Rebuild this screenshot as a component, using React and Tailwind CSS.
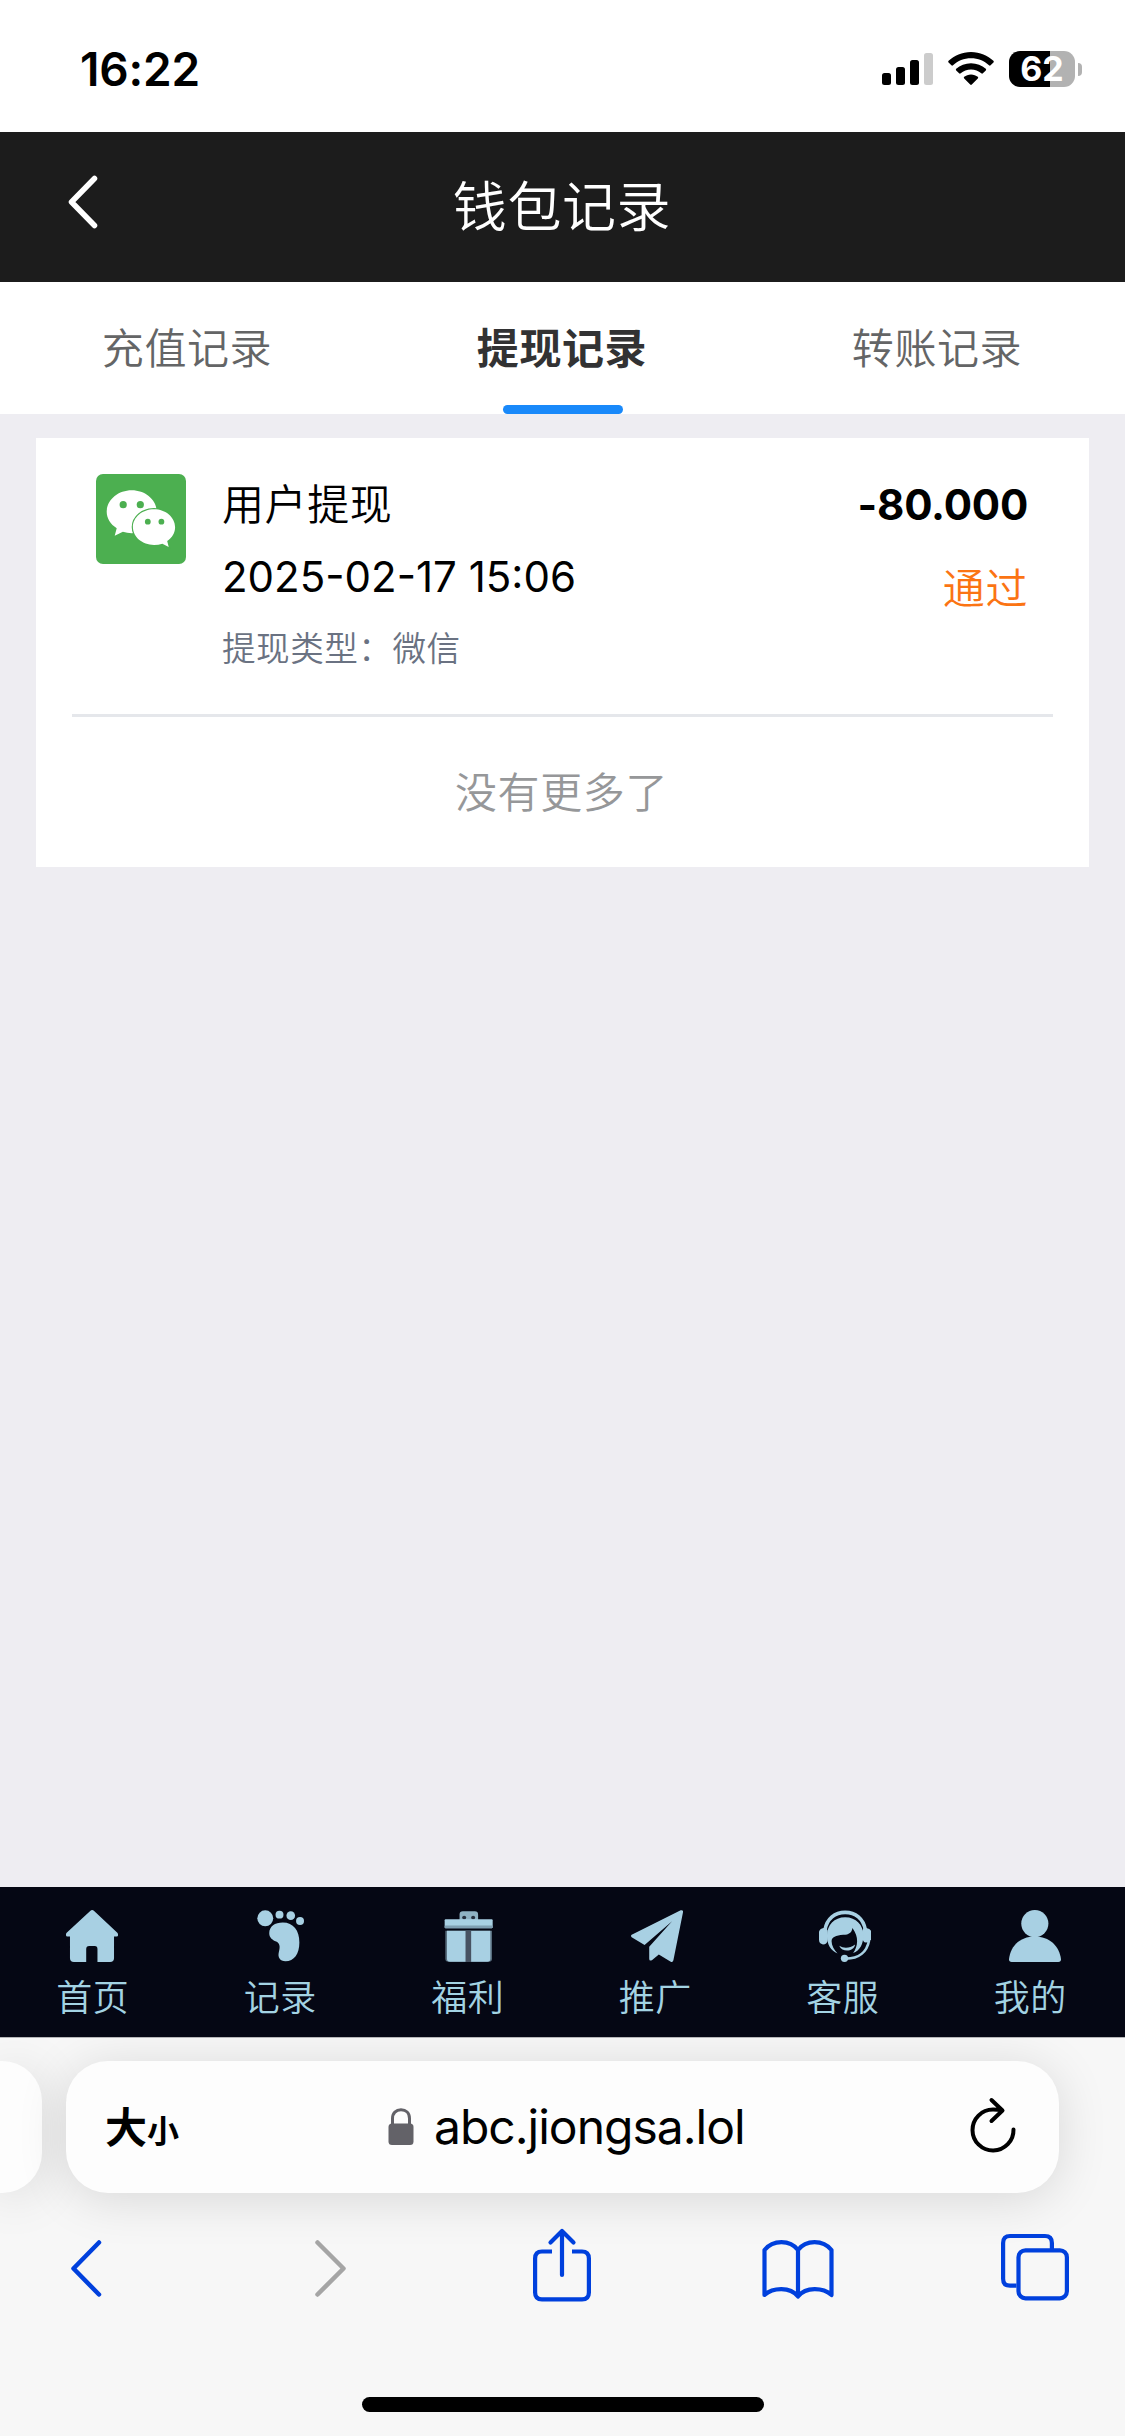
import React, { useState } from 'react';

// ==========================================================
// DATOS
// ==========================================================
const TABS = ['充值记录', '提现记录', '转账记录'];

const RECORDS = [
  { id: 1, title: '用户提现', time: '2025-02-17 15:06', type: '微信', amount: '-80.000', status: '通过' },
];

// ==========================================================
// ICONOS
// ==========================================================
const WechatIcon = () => (
  <svg viewBox="0 0 90 90" className="w-[90px] h-[90px] shrink-0">
    <rect width="90" height="90" rx="7" fill="#4caf50" />
    <path d="M35.7 16.3C49.5 16.3 60.8 26 60.8 37.8S49.5 59.2 35.7 59.2c-3 0-6-.5-8.8-1.4L18.700 61.700l2-7.500C14.500 50.300 10.700 44.500 10.700 37.800 10.700 26 22 16.300 35.700 16.300Z" fill="#fff" />
    <path d="M58 35.200c11.700 0 21.100 8 21.100 18 0 5.500-3 10.500-7.900 13.700l1.500 6.100-6.300-3.200c-2.600.8-5.400 1.200-8.400 1.200-11.700 0-21.100-8-21.100-17.900s9.400-17.900 21.100-17.900Z" fill="#fff" stroke="#4caf50" strokeWidth="2.4" paintOrder="stroke" />
    <g fill="#4caf50">
      <circle cx="27.2" cy="30.7" r="3.6" />
      <circle cx="44.3" cy="30.7" r="3.6" />
      <circle cx="51.8" cy="47.7" r="2.9" />
      <circle cx="65.4" cy="47.7" r="2.9" />
    </g>
  </svg>
);

const NavSvg = ({ children }) => (
  <svg viewBox="0 0 157 157" className="w-[52px] h-[52px]" fill="#a8d0e3">
    {children}
  </svg>
);

const HomeIcon = () => (
  <NavSvg>
    <path d="M73 3q6-6 12 0l70 66q2 2 2 5v3q0 3-4 3h-8v65q0 12-12 12H95v-39q0-9-8-9H70q-9 0-9 9v39H24q-12 0-12-12V80H4q-4 0-4-4v-3q0-2 2-4Z" />
  </NavSvg>
);

const FootIcon = () => (
  <NavSvg>
    <circle cx="31" cy="25" r="24" />
    <circle cx="74" cy="14" r="12" />
    <circle cx="108" cy="17" r="13" />
    <circle cx="136" cy="33" r="12" />
    <path d="M43 70C43 50 60 38 84 38c32 0 50 24 50 60 0 34-16 57-42 57-17 0-24-12-20-28 4-15 4-26-8-32-12-5-21-12-21-25Z" />
  </NavSvg>
);

const GiftIcon = () => (
  <NavSvg>
    <path d="M50 30V14q0-10 10-10h36q10 0 10 10v16Z" opacity="0.85" />
    <circle cx="64" cy="23" r="6" fill="#26303f" />
    <circle cx="91" cy="23" r="6" fill="#26303f" />
    <rect x="5" y="28" width="145" height="27" rx="3" />
    <rect x="5" y="47" width="145" height="8" rx="3" fill="#7f9fb2" />
    <path d="M7 63h141v84q0 9-9 9H16q-9 0-9-9Z" opacity="0.5" />
    <path d="M12 63h131v84q0 9-9 9H21q-9 0-9-9Z" />
    <rect x="68" y="63" width="17" height="94" fill="#475262" />
  </NavSvg>
);

const PlaneIcon = () => (
  <NavSvg>
    <path d="M2 75 150 1q8-2 7 6l-29 145q-2 7-8 4l-36-22-20 17q-9 5-9-4v-36l69-77-83 72L2 82q-4-4 0-7Z" />
  </NavSvg>
);

const ServiceIcon = () => (
  <NavSvg>
    <path d="M18 60C24 26 48 7 79 7s55 19 61 53" fill="none" stroke="#a8d0e3" strokeWidth="11" />
    <path d="M14 54q10-2 12 8v30q-2 12-14 12-12-2-12-14V66q2-10 14-12ZM143 54q-10-2-12 8v22q2 16 12 14 14-2 15-12V66q-2-10-15-12Z" />
    <path d="M24 78C24 46 46 22 79 22s55 24 55 54c0 26-10 46-31 54 15-22 18-48-2-76-2 14-10 20-28 21-22 2-35 8-35 19 0 14 8 26 18 37C36 124 24 104 24 78Z" />
    <path d="M61 108c14 9 32 8 48-4-4 22-38 26-48 4Z" />
    <path d="M151 92c-6 34-30 55-70 55" fill="none" stroke="#a8d0e3" strokeWidth="8" />
    <circle cx="77" cy="146" r="11" />
  </NavSvg>
);

const UserIcon = () => (
  <NavSvg>
    <circle cx="78" cy="41" r="41" />
    <path d="M0 149C4 108 34 80 78 80s74 28 79 69q0 8-8 8H8q-8 0-8-8Z" />
  </NavSvg>
);

const NAV_ITEMS = [
  { label: '首页', icon: HomeIcon, shift: '-translate-x-[1px]' },
  { label: '记录', icon: FootIcon, shift: 'translate-x-[1px]' },
  { label: '福利', icon: GiftIcon, shift: 'translate-x-[1px]' },
  { label: '推广', icon: PlaneIcon, shift: 'translate-x-[2px]' },
  { label: '客服', icon: ServiceIcon, shift: 'translate-x-[2px]' },
  { label: '我的', icon: UserIcon, shift: 'translate-x-[5px]' },
];

// ==========================================================
// BARRA DE ESTADO
// ==========================================================
const StatusBar = () => (
  <div className="h-[132px] bg-white flex items-start justify-between pl-[80px] pr-[43px] shrink-0">
    <span className="mt-[39px] text-[46px] leading-[60px] font-semibold text-black tracking-[-0.2px]">16:22</span>
    <div className="flex mt-[51px]">
      <svg viewBox="0 0 51 36" className="w-[51px] h-9">
        <rect x="0" y="22" width="9" height="12" rx="2.5" />
        <rect x="14" y="16" width="9" height="18" rx="2.5" />
        <rect x="28" y="9" width="9" height="25" rx="2.5" />
        <rect x="42" y="2" width="9" height="32" rx="2.5" fill="#cccccc" />
      </svg>
      <svg viewBox="0 0 46 36" className="w-[46px] h-9 ml-[15px]">
        <path d="M23 1C14 1 6.300 4.500.600 9.800q-.8.8 0 1.700l2.800 2.800q.8.800 1.600 0C9.800 9.800 16 7.300 23 7.300s13.200 2.500 18 7q.8.8 1.600 0l2.800-2.800q.8-.9 0-1.700C39.700 4.500 32 1 23 1Z" />
        <path d="M23 12.200c-5.700 0-10.900 2.100-14.800 5.600q-.8.8 0 1.600l2.900 2.900q.8.700 1.600 0c2.800-2.400 6.300-3.900 10.300-3.900s7.500 1.500 10.300 3.900q.8.700 1.600 0l2.900-2.900q.8-.8 0-1.600C33.900 14.300 28.700 12.200 23 12.200Z" />
        <path d="M23 23.400c-2.700 0-5 .9-6.800 2.400q-.9.800 0 1.700l6 6.100q.8.700 1.600 0l6-6.100q.9-.9 0-1.700c-1.800-1.500-4.100-2.400-6.800-2.400Z" />
      </svg>
      <div className="ml-[15px] w-[66px] h-9 rounded-[11px] bg-linear-to-r from-black from-62% to-[#b2b2b2] to-62% flex items-center justify-center text-white text-[34px] leading-9 font-bold">
        62
      </div>
      <div className="ml-[3px] mt-3 w-1 h-[13px] rounded-r-full bg-[#b2b2b2]" />
    </div>
  </div>
);

// ==========================================================
// REGISTRO
// ==========================================================
const RecordRow = ({ record }) => (
  <div className="mx-9 h-[279px] pt-9 pl-6 pr-[25px] flex border-b-3 border-[#e5e7eb]">
    <WechatIcon />
    <div className="ml-9 flex-1 flex flex-col whitespace-nowrap">
      <span className="mt-[-1px] text-[42px] leading-[64px] tracking-[0.6px] font-[350] text-black">{record.title}</span>
      <span className="mt-2 text-[42px] leading-[64px] text-black">{record.time}</span>
      <span className="mt-2 text-[33.6px] leading-[64px] tracking-[0.5px] font-[350] text-gray-500">提现类型：{record.type}</span>
    </div>
    <div className="flex flex-col items-end">
      <span className="mt-[-1px] text-[42px] leading-[64px] tracking-[-0.2px] font-bold text-black">{record.amount}</span>
      <span className="mt-5 text-[42px] leading-[64px] tracking-[0.6px] font-[350] text-[#fb7413]">{record.status}</span>
    </div>
  </div>
);

// ==========================================================
// NAVEGADOR (barra inferior)
// ==========================================================
const BrowserBar = () => (
  <div className="h-[399px] bg-[#f7f7f7] border-t border-[#b5b5b8] overflow-hidden shrink-0 flex flex-col">
    <div className="mt-[23px] h-[132px] flex shrink-0">
      <div className="w-[42px] bg-[#fdfdfd] rounded-r-[40px] shadow-[0_6px_50px_rgba(0,0,0,0.13)]" />
      <div className="ml-6 w-[993px] bg-[#fdfdfd] rounded-[42px] shadow-[0_6px_50px_rgba(0,0,0,0.13)] flex items-center">
        <div className="ml-[39px] mt-[6px] w-[75px] flex items-baseline font-bold text-black whitespace-nowrap">
          <span className="text-[42px] leading-[60px]">大</span>
          <span className="text-[32px] leading-[60px]">小</span>
        </div>
        <svg viewBox="0 0 26 38" className="ml-[208px] w-[26px] h-[38px]">
          <path d="M4.5 17V10.500C4.500 5 8 1.800 13 1.800s8.500 3.200 8.500 8.700V17" fill="none" stroke="#636268" strokeWidth="3" />
          <rect x="0.5" y="15.5" width="25" height="21.5" rx="3.5" fill="#636268" />
        </svg>
        <span className="ml-[20px] w-[320px] text-[48px] leading-[60px] tracking-[-1px] text-black">abc.jiongsa.lol</span>
        <svg viewBox="0 0 46 56" className="ml-[216px] mt-[-4px] w-[46px] h-14" fill="none" stroke="#000" strokeWidth="4" strokeLinecap="round" strokeLinejoin="round">
          <path d="M43.500 32.500A20.500 20.500 0 1 1 23 12.500q5 0 9 1M21.500 3l11 10.500-11 10.500" />
        </svg>
      </div>
    </div>
    <div className="mt-[33px] flex items-start">
      <svg viewBox="0 0 32 60" className="ml-[70px] mt-3 w-8 h-[60px]" fill="none" stroke="#0040dd" strokeWidth="4.5" strokeLinecap="round" strokeLinejoin="round">
        <path d="M29 4.500 3.500 30.500 29 56.500" />
      </svg>
      <svg viewBox="0 0 32 60" className="ml-[213px] mt-3 w-8 h-[60px]" fill="none" stroke="#a5a5a5" strokeWidth="4.5" strokeLinecap="round" strokeLinejoin="round">
        <path d="m2.500 4.500 26 26-26 26" />
      </svg>
      <svg viewBox="0 0 58 76" className="ml-[186px] mt-[2px] w-[58px] h-[76px]" fill="none" stroke="#0040dd" strokeWidth="4.2" strokeLinejoin="round">
        <path d="M19 23.500H9q-6.900 0-6.900 7v34q0 6.900 6.900 6.900h40q6.900 0 6.900-6.900v-34q0-7-6.900-7H39" />
        <path d="M29 47V3M17.500 14.500 29 3l11.500 11.500" strokeLinecap="round" />
      </svg>
      <svg viewBox="0 0 72 62" className="ml-[171px] mt-[12px] w-[72px] h-[62px]" fill="none" stroke="#0040dd" strokeWidth="4.2" strokeLinecap="round" strokeLinejoin="round">
        <path d="M36 12C28 1.500 11 1.500 2.500 12v45C11 49.500 28 48.500 36 58.500 44 48.500 61 49.500 69.500 57V12C61 1.500 44 1.500 36 12Zm0 0v46" />
      </svg>
      <svg viewBox="0 0 68 68" className="ml-[167px] mt-[7px] w-[68px] h-[68px]" fill="none" stroke="#0040dd" strokeWidth="4.2">
        <path d="M15.500 52.700H9q-6.900 0-6.900-6.900V10Q2.100 3 9 3h35q6.900 0 6.900 7v7" />
        <rect x="17.5" y="17.3" width="48.4" height="48" rx="7" />
      </svg>
    </div>
    <div className="absolute bottom-6 left-[362px] w-[402px] h-[15px] rounded-full bg-black" />
  </div>
);

// ==========================================================
// PÁGINA PRINCIPAL
// ==========================================================
export default function App() {
  const [activeTab, setActiveTab] = useState(1);

  return (
    <div className="relative w-[1125px] h-[2436px] flex flex-col bg-[#eeedf2] overflow-hidden font-[Inter,'Noto_Sans_CJK_SC',sans-serif]">
      <StatusBar />

      <header className="h-[150px] bg-[#1c1c1c] flex items-center shrink-0">
        <svg viewBox="0 0 30 54" className="ml-[68px] mt-[-10px] w-[30px] h-[54px]" fill="none" stroke="#fff" strokeWidth="5.5" strokeLinecap="round" strokeLinejoin="round">
          <path d="M26.500 3.500 3.500 27l23 23.500" />
        </svg>
        <h1 className="flex-1 mr-[99px] text-center text-[54px] tracking-[0.6px] text-white font-[350]">钱包记录</h1>
      </header>

      {/* Pestañas */}
      <div className="h-[132px] bg-white grid grid-cols-3 shrink-0">
        {TABS.map((tab, i) => (
          <button key={tab} onClick={() => setActiveTab(i)} className="flex flex-col items-center">
            <span className={`pt-[35px] h-[123px] mr-[1px] leading-[64px] text-[42px] tracking-[0.6px] ${i === activeTab ? 'font-bold text-[#323233]' : 'font-[350] text-[#646566]'}`}>
              {tab}
            </span>
            {i === activeTab && <span className="w-[120px] h-[9px] rounded-full bg-[#1989fa]" />}
          </button>
        ))}
      </div>

      <main className="flex-1">
        <div className="mx-9 mt-6 h-[429px] bg-white">
          {RECORDS.map((record) => (
            <RecordRow key={record.id} record={record} />
          ))}
          <p className="h-[150px] mr-[2px] leading-[152px] text-center text-[42px] tracking-[0.6px] font-[350] text-[#969799]">没有更多了</p>
        </div>
      </main>

      {/* Navegación inferior */}
      <nav className="h-[150px] bg-[#050714] grid grid-cols-6 shrink-0">
        {NAV_ITEMS.map(({ label, icon: Icon, shift }) => (
          <div key={label} className="flex flex-col items-center pt-[23px] mr-[2px]">
            <div className={shift}>
              <Icon />
            </div>
            <span className="mt-[9px] text-[36px] leading-[54px] tracking-[0.6px] font-[350] text-[#a3d3e3]">{label}</span>
          </div>
        ))}
      </nav>

      <BrowserBar />
    </div>
  );
}
